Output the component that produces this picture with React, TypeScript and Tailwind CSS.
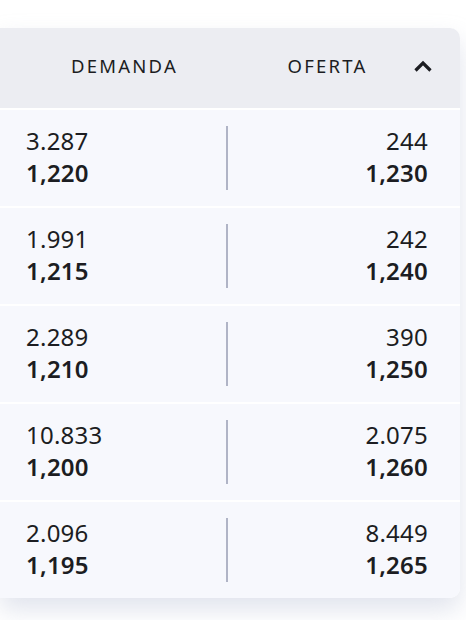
import React from "react";

const rows = [
  ["3.287", "1,220", "244", "1,230"],
  ["1.991", "1,215", "242", "1,240"],
  ["2.289", "1,210", "390", "1,250"],
  ["10.833", "1,200", "2.075", "1,260"],
  ["2.096", "1,195", "8.449", "1,265"],
];

export default function App() {
  return (
    <div className="w-[466px] h-[620px] bg-white pt-[28px] pr-[6px]" style={{ fontFamily: '"Noto Sans", "Open Sans", sans-serif' }}>
      <div className="w-[460px] flex flex-col gap-[2px] rounded-r-[10px] shadow-[0_12px_24px_rgba(180,188,210,0.4)] bg-white">
        <div className="relative h-[80px] bg-[#ecedf2] rounded-tr-[10px] grid grid-cols-2 items-center pl-[26px] pr-[32px] pb-[4px] text-[#1c1d22] text-[18.5px] tracking-[0.12em]">
          <div className="text-center pr-[4px]">DEMANDA</div>
          <div className="text-center">OFERTA</div>
          <svg className="absolute right-[27px] top-[31px]" width="20" height="14" viewBox="0 0 20 14">
            <path d="M2.5 11.5 L10 4 L17.5 11.5" fill="none" stroke="#1c1d22" strokeWidth="3.2" />
          </svg>
        </div>
        {rows.map((r, i) => (
          <div key={i} className={`h-[96px] bg-[#f7f8fd] flex items-center pl-[26px] pr-[32px] text-[24px] leading-[32px] tracking-[0.01em] text-[#1c1d22] ${i === rows.length - 1 ? "rounded-br-[10px]" : ""}`}>
            <div className="flex-1 flex flex-col -mt-[2px]">
              <span>{r[0]}</span>
              <span className="font-semibold">{r[1]}</span>
            </div>
            <div className="w-[2px] h-[64px] bg-[#b0b4c6]" />
            <div className="flex-1 flex flex-col items-end -mt-[2px]">
              <span>{r[2]}</span>
              <span className="font-semibold">{r[3]}</span>
            </div>
          </div>
        ))}
      </div>
    </div>
  );
}
